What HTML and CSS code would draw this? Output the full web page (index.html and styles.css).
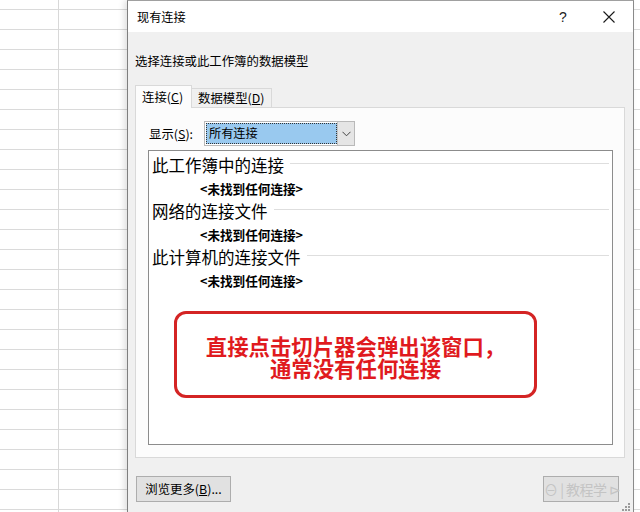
FILE: index.html
```html
<!DOCTYPE html>
<html lang="zh-CN">
<head>
<meta charset="utf-8">
<title>现有连接</title>
<link rel="stylesheet" href="styles.css">
</head>
<body>
<div class="sheet">
  <div class="dialog">
    <div class="titlebar">
      <span class="title">现有连接</span>
      <span class="tb-btn help">?</span>
      <span class="tb-btn close">
        <svg width="12" height="12" viewBox="0 0 12 12"><path d="M0.5 0.5 L11.5 11.5 M11.5 0.5 L0.5 11.5" stroke="#1a1a1a" stroke-width="1.1" fill="none"/></svg>
      </span>
    </div>
    <div class="content">
      <div class="subtitle">选择连接或此工作簿的数据模型</div>
      <div class="tabs">
        <div class="tab active">连接(<u>C</u>)</div>
        <div class="tab">数据模型(<u>D</u>)</div>
      </div>
      <div class="panel">
        <div class="show-row">
          <span class="show-label">显示(<u>S</u>):</span>
          <div class="combo">
            <div class="combo-value">所有连接</div>
            <div class="combo-btn">
              <svg width="9" height="6" viewBox="0 0 9 6"><path d="M0.5 0.8 L4.5 4.8 L8.5 0.8" stroke="#444" stroke-width="1" fill="none"/></svg>
            </div>
          </div>
        </div>
        <div class="list">
          <div class="group-head"><span>此工作簿中的连接</span><i class="rule"></i></div>
          <div class="item">&lt;未找到任何连接&gt;</div>
          <div class="group-head"><span>网络的连接文件</span><i class="rule"></i></div>
          <div class="item">&lt;未找到任何连接&gt;</div>
          <div class="group-head"><span>此计算机的连接文件</span><i class="rule"></i></div>
          <div class="item">&lt;未找到任何连接&gt;</div>
          <div class="note">
            <div class="note-line">直接点击切片器会弹出该窗口，</div>
            <div class="note-line">通常没有任何连接</div>
          </div>
        </div>
      </div>
      <div class="buttons">
        <div class="btn browse">浏览更多(<u>B</u>)...</div>
        <div class="btn open"><span class="wm">⊖ | 教程学 ⊳</span></div>
      </div>
    </div>
    <svg class="grip" width="8" height="8" viewBox="0 0 8 8"><g fill="#9a9a9a"><rect x="6" y="0" width="2" height="2"/><rect x="3" y="3" width="2" height="2"/><rect x="6" y="3" width="2" height="2"/><rect x="0" y="6" width="2" height="2"/><rect x="3" y="6" width="2" height="2"/><rect x="6" y="6" width="2" height="2"/></g></svg>
  </div>
</div>
</body>
</html>
```
FILE: styles.css
```css
* { box-sizing: border-box; }
html, body { margin: 0; padding: 0; }
body {
  width: 640px;
  height: 512px;
  overflow: hidden;
  font-family: "Noto Sans CJK SC", "Noto Sans", sans-serif;
  color: #000;
  background-color: #fff;
  background-image:
    linear-gradient(to right, transparent 58px, #d8d8d8 58px, #d8d8d8 59px, transparent 59px),
    linear-gradient(to bottom, #dadada 1px, transparent 1px);
  background-size: 100% 100%, 100% 20px;
  background-position: 0 0, 0 9px;
  background-repeat: no-repeat, repeat;
}
.sheet { width: 640px; height: 512px; }
.dialog {
  position: relative;
  margin-left: 127px;
  width: 507px;
  height: 512px;
  background: #f0f0f0;
  border-left: 1px solid #7e7e7e;
  border-right: 1px solid #8a8a8a;
  border-top: 1px solid #a0a0a0;
  box-shadow: -3px 0 6px rgba(0,0,0,0.12);
}
.titlebar {
  height: 31px;
  background: #fff;
  display: flex;
  align-items: center;
  padding-left: 9px;
}
.title { font-size: 12.2px; flex: 1; }
.tb-btn {
  width: 46px;
  height: 31px;
  display: flex;
  align-items: center;
  justify-content: center;
}
.help { font-size: 14px; font-family: "Liberation Sans", sans-serif; color: #222; }
.close { margin-right: 1px; }
.content { padding: 0 8px 0 7px; }
.subtitle {
  margin-top: 21px;
  font-size: 12.4px;
  line-height: 17px;
}
.tabs {
  margin-top: 15px;
  display: flex;
  align-items: flex-end;
  height: 22px;
}
.tab {
  height: 19px;
  padding: 0 6px;
  font-size: 12.4px;
  line-height: 18px;
  background: #f0f0f0;
  border: 1px solid #d9d9d9;
  border-bottom: none;
  border-left: none;
  white-space: nowrap;
}
.tab.active {
  position: relative;
  z-index: 1;
  height: 23px;
  margin-bottom: -1px;
  width: 57px;
  background: #fcfcfc;
  border-left: 1px solid #d9d9d9;
  line-height: 22px;
}
.panel {
  height: 351px;
  background: #fcfcfc;
  border: 1px solid #d9d9d9;
  padding: 0 11px 0 12px;
}
.show-row {
  display: flex;
  align-items: center;
  margin-top: 13px;
  height: 25px;
}
.show-label {
  width: 56px;
  font-size: 12.4px;
  padding-left: 1px;
}
.combo {
  width: 151px;
  height: 25px;
  border: 1px solid #b9b9b9;
  background: #fff;
  display: flex;
  padding: 1px;
}
.combo-value {
  flex: 1;
  background: #99c9ef;
  border: 1px dotted #333;
  font-size: 12.2px;
  line-height: 19px;
  padding-left: 2px;
}
.combo-btn {
  width: 17px;
  background: #e5e5e5;
  border-left: 1px solid #c4c4c4;
  display: flex;
  align-items: center;
  justify-content: center;
  margin: -1px -1px -1px 0;
}
.list {
  position: relative;
  margin-top: 4px;
  height: 295px;
  background: #fff;
  border: 1px solid #8c8c8c;
  padding: 3px 3px 0 3px;
}
.group-head {
  display: flex;
  align-items: center;
  height: 23px;
  font-size: 16.5px;
  line-height: 23px;
  white-space: nowrap;
}
.rule {
  flex: 1;
  height: 1px;
  margin: 0 0 4px 6px;
  background: #dedede;
}
.item {
  height: 23px;
  line-height: 23px;
  padding-left: 48px;
  font-size: 12.6px;
  font-weight: bold;
}
.note {
  position: absolute;
  left: 25px;
  top: 160px;
  width: 363px;
  height: 87px;
  border: 3px solid #d42424;
  border-radius: 12px;
  color: #e01a1e;
  font-weight: bold;
  font-size: 21.4px;
  text-align: center;
  padding-top: 21px;
  display: flex;
  flex-direction: column;
  align-items: center;
}
.note-line {
  height: 22px;
  line-height: 22px;
  white-space: nowrap;
}
.buttons {
  display: flex;
  justify-content: space-between;
  margin-top: 18px;
}
.btn {
  height: 26px;
  background: #e1e1e1;
  border: 1px solid #adadad;
  font-size: 12.4px;
  line-height: 24px;
  text-align: center;
  white-space: nowrap;
}
.browse { width: 95px; margin-left: 1px; }
.open { width: 76px; margin-right: 6px; }
.wm {
  font-size: 14px;
  color: #c4c4c4;
  letter-spacing: -0.5px;
}
.grip {
  position: absolute;
  right: 3px;
  bottom: 1px;
}
```
